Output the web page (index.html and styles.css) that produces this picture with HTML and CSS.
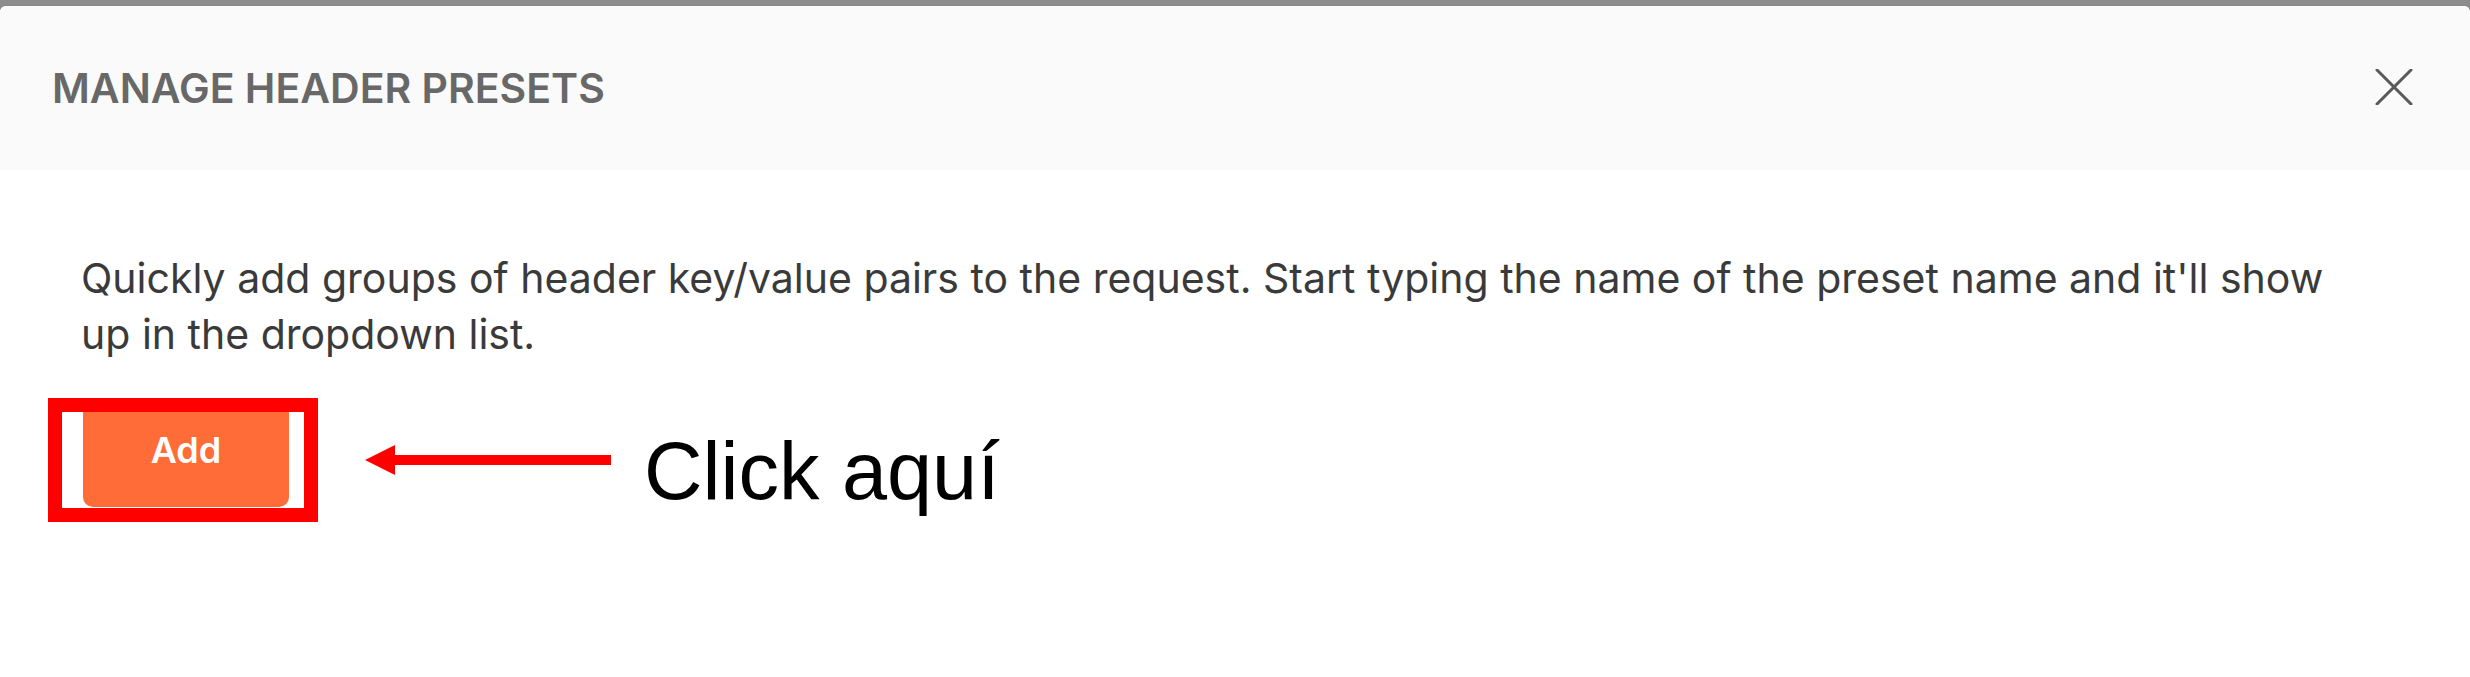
FILE: index.html
```html
<!DOCTYPE html>
<html lang="es">
<head>
<meta charset="utf-8">
<title>Manage Header Presets</title>
<link rel="stylesheet" href="styles.css">
</head>
<body>
<div class="frame">
  <div class="modal">
    <header class="modal-header">
      <h1 class="modal-title">MANAGE HEADER PRESETS</h1>
      <button class="close-btn" aria-label="Close">
        <svg width="38" height="36" viewBox="0 0 38 36"><path d="M2 1 L36 35 M36 1 L2 35" stroke="#5a5a5a" stroke-width="3" stroke-linecap="round" fill="none"/></svg>
      </button>
    </header>
    <section class="modal-body">
      <p class="desc">Quickly add groups of header key/value pairs to the request. Start typing the name of the preset name and it'll show up in the dropdown list.</p>
      <div class="action-row">
        <div class="highlight">
          <button class="add-btn">Add</button>
        </div>
        <svg class="arrow" width="246" height="30" viewBox="0 0 246 30"><polygon points="0,15 30,0 30,30" fill="#ff0000"/><rect x="29" y="10" width="217" height="10" fill="#ff0000"/></svg>
        <span class="note">Click aquí</span>
      </div>
    </section>
  </div>
</div>
</body>
</html>
```
FILE: styles.css
```css
html, body {
  margin: 0;
  padding: 0;
  background: #ffffff;
}
.frame {
  background: #8c8c8c;
  padding-top: 6px;
  height: 671px;
}
.modal {
  background: #ffffff;
  border-radius: 6px 6px 0 0;
  height: 671px;
  overflow: hidden;
}
.modal-header {
  background: #fafafa;
  height: 164px;
  display: flex;
  align-items: center;
  justify-content: space-between;
  padding: 0 57px 0 52px;
}
.modal-title {
  margin: 0;
  font-family: Inter, "Noto Sans", sans-serif;
  font-weight: 600;
  font-size: 41px;
  color: #686868;
}
.close-btn {
  background: none;
  border: 0;
  padding: 0;
  display: flex;
  margin-top: -2px;
}
.modal-body {
  padding: 80px 0 0 48px;
}
.desc {
  margin: 0 0 36px 33px;
  font-family: Inter, "Noto Sans", sans-serif;
  font-size: 41px;
  line-height: 56px;
  color: #3a3a3a;
  max-width: 2300px;
}
.action-row {
  display: flex;
  align-items: center;
}
.highlight {
  border: 14px solid #ff0000;
  padding: 0 15px 1px 21px;
  width: 206px;
}
.add-btn {
  display: block;
  width: 206px;
  height: 95px;
  border: 0;
  border-radius: 0 0 10px 10px;
  background: #ff6c37;
  color: #ffffff;
  font-family: Inter, "Noto Sans", sans-serif;
  font-weight: 600;
  font-size: 36px;
  padding: 0 0 19px 0;
}
.arrow {
  margin-left: 47px;
}
.note {
  margin-left: 33px;
  margin-top: 22px;
  font-family: "Liberation Sans", Arial, sans-serif;
  font-size: 81px;
  color: #000000;
}
```
